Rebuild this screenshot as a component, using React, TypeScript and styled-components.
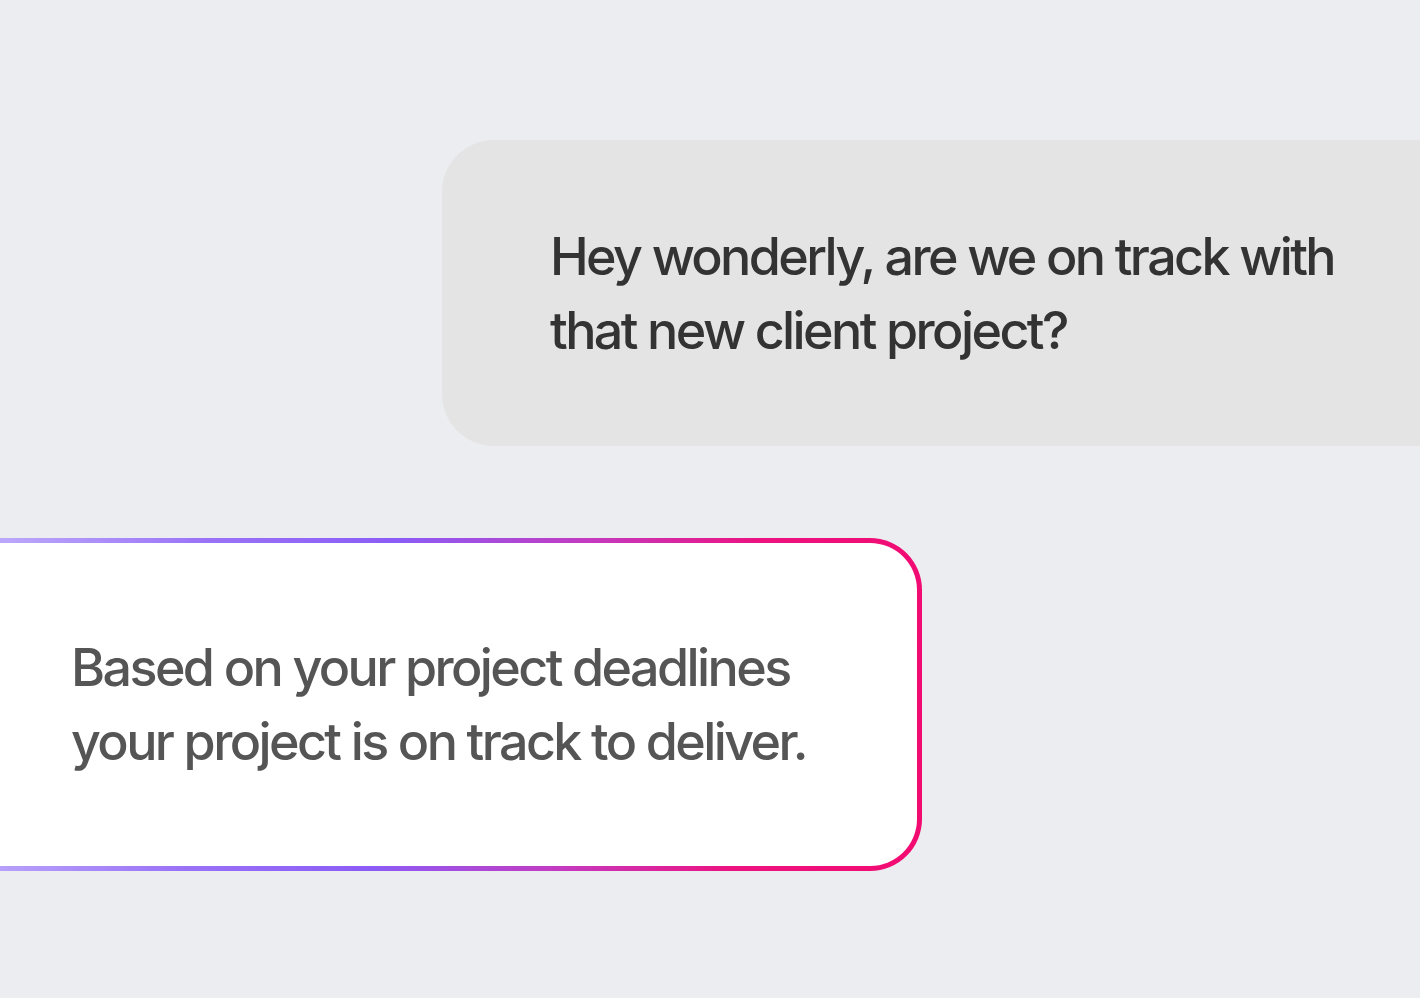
import React from 'react';
import styled, { createGlobalStyle } from 'styled-components';

const GlobalStyle = createGlobalStyle`
  html, body {
    margin: 0;
    padding: 0;
    background: #ecedf1;
  }
  body {
    font-family: Inter, "Noto Sans", sans-serif;
    overflow: hidden;
  }
`;

const Page = styled.div`
  width: 1420px;
  height: 998px;
  display: flex;
  flex-direction: column;
  padding-top: 140px;
  box-sizing: border-box;
  overflow: hidden;
`;

const Bubble = styled.div`
  box-sizing: border-box;
  font-size: 52px;
  font-weight: 500;
  line-height: 74px;
  letter-spacing: -2.6px;
  white-space: nowrap;
`;

const UserBubble = styled(Bubble)`
  align-self: flex-end;
  width: 978px;
  height: 306px;
  background: #e4e4e4;
  border-radius: 52px 0 0 52px;
  color: #333333;
  padding: 80px 40px 0 108px;
`;

const BotFrame = styled.div`
  margin-top: 92px;
  width: 922px;
  height: 333px;
  box-sizing: border-box;
  padding: 5px 5px 5px 0;
  border-radius: 0 52px 52px 0;
  background: linear-gradient(95deg, #bba8fa 0%, #9a72f7 22%, #8b5cf6 42%, #c43ac0 62%, #ec1280 80%, #f20a70 100%);
`;

const BotBubble = styled(Bubble)`
  height: 100%;
  background: #ffffff;
  border-radius: 0 47px 47px 0;
  color: #555555;
  padding: 88px 40px 0 71px;
`;

export default function App() {
  return (
    <>
      <GlobalStyle />
      <Page>
        <UserBubble>
          Hey wonderly, are we on track with
          <br />
          that new client project?
        </UserBubble>
        <BotFrame>
          <BotBubble>
            Based on your project deadlines
            <br />
            your project is on track to deliver.
          </BotBubble>
        </BotFrame>
      </Page>
    </>
  );
}
